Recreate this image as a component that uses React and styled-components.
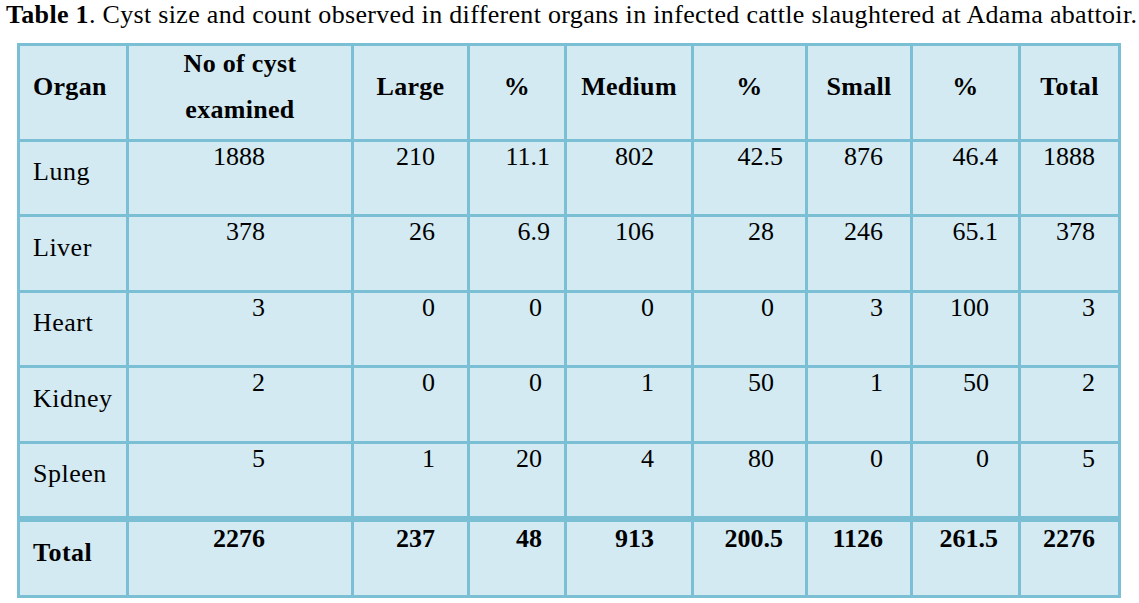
import React from 'react';
import styled, { createGlobalStyle } from 'styled-components';

const serif = `'Liberation Serif', 'Times New Roman', serif`;

const GlobalStyle = createGlobalStyle`
  html, body {
    margin: 0;
    padding: 0;
    background: #ffffff;
  }
`;

const Page = styled.div`
  width: 1139px;
  height: 603px;
  overflow: hidden;
  font-family: ${serif};
  color: #000000;
`;

const Caption = styled.div`
  font-family: ${serif};
  margin-left: 6px;
  font-size: 26px;
  letter-spacing: 0.32px;
  line-height: 29px;
  height: 29px;
  margin-bottom: 14px;
  white-space: nowrap;
  b {
    font-weight: 700;
  }
`;

const Grid = styled.div`
  margin-left: 17px;
  display: grid;
  width: max-content;
  grid-template-columns: 106px 222px 113px 94px 124px 111px 102px 105px 97px;
  grid-template-rows: 93px 72px 73px 72px 73px 72px 76px;
  gap: 3px;
  padding: 3px;
  background: #7bbfd4;
`;

const Cell = styled.div`
  font-family: ${serif};
  background: #d3eaf2;
  box-sizing: border-box;
  font-size: 26px;
  display: flex;
  border-top: ${p => (p.$last ? '3px solid #7bbfd4' : 'none')};
`;

const HeadCell = styled(Cell)`
  font-weight: 700;
  line-height: 46px;
  letter-spacing: 0.3px;
  align-items: center;
  justify-content: ${p => (p.$left ? 'flex-start' : 'center')};
  text-align: ${p => (p.$left ? 'left' : 'center')};
  padding: 0 0 12px ${p => (p.$left ? '13px' : '0')};
`;

const OrganCell = styled(Cell)`
  font-weight: ${p => (p.$bold ? 700 : 400)};
  line-height: 30px;
  letter-spacing: 0.5px;
  align-items: center;
  padding: 0 0 12px 13px;
`;

const NumCell = styled(Cell)`
  font-weight: ${p => (p.$bold ? 700 : 400)};
  line-height: 30px;
  align-items: flex-start;
  justify-content: flex-end;
  padding: ${p => (p.$bold ? '2px' : '0')} ${p => p.$pad}px 0 0;
`;

// right padding per column: integer values / values with a decimal point
const columns = [
  { int: 86, dec: 86 },
  { int: 32, dec: 32 },
  { int: 22, dec: 14 },
  { int: 37, dec: 37 },
  { int: 31, dec: 22 },
  { int: 27, dec: 27 },
  { int: 29, dec: 20 },
  { int: 23, dec: 23 },
];

const headers = [
  ['No of cyst', 'examined'],
  ['Large'],
  ['%'],
  ['Medium'],
  ['%'],
  ['Small'],
  ['%'],
  ['Total'],
];

const rows = [
  { organ: 'Lung', values: ['1888', '210', '11.1', '802', '42.5', '876', '46.4', '1888'] },
  { organ: 'Liver', values: ['378', '26', '6.9', '106', '28', '246', '65.1', '378'] },
  { organ: 'Heart', values: ['3', '0', '0', '0', '0', '3', '100', '3'] },
  { organ: 'Kidney', values: ['2', '0', '0', '1', '50', '1', '50', '2'] },
  { organ: 'Spleen', values: ['5', '1', '20', '4', '80', '0', '0', '5'] },
];

const total = { organ: 'Total', values: ['2276', '237', '48', '913', '200.5', '1126', '261.5', '2276'] };

const padFor = (i, v) => (v.includes('.') ? columns[i].dec : columns[i].int);

const Row = ({ row, bold }) => (
  <>
    <OrganCell $bold={bold} $last={bold}>{row.organ}</OrganCell>
    {row.values.map((v, i) => (
      <NumCell key={i} $bold={bold} $last={bold} $pad={padFor(i, v)}>
        {v}
      </NumCell>
    ))}
  </>
);

const App = () => {
  return (
    <Page>
      <GlobalStyle />
      <Caption>
        <b>Table 1</b>. Cyst size and count observed in different organs in infected cattle slaughtered at Adama abattoir.
      </Caption>
      <Grid>
        <HeadCell $left>Organ</HeadCell>
        {headers.map((h, i) => (
          <HeadCell key={i}>
            <div>
              {h.map((line, j) => (
                <div key={j}>{line}</div>
              ))}
            </div>
          </HeadCell>
        ))}
        {rows.map(r => (
          <Row key={r.organ} row={r} />
        ))}
        <Row row={total} bold />
      </Grid>
    </Page>
  );
};

export default App;
